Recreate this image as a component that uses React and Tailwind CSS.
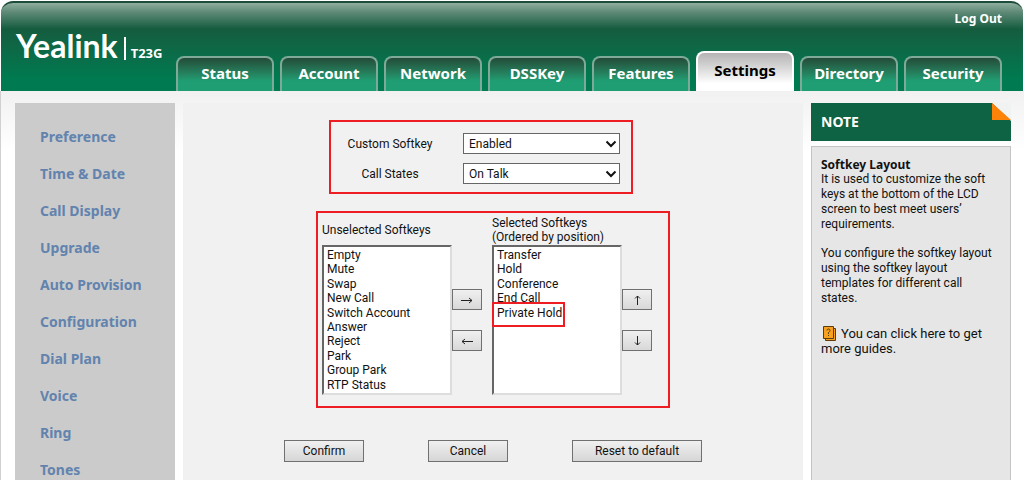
import React, { useState } from 'react';

const TABS = ['Status', 'Account', 'Network', 'DSSKey', 'Features', 'Settings', 'Directory', 'Security'];

const MENU = [
  'Preference',
  'Time & Date',
  'Call Display',
  'Upgrade',
  'Auto Provision',
  'Configuration',
  'Dial Plan',
  'Voice',
  'Ring',
  'Tones'
];

const UNSELECTED = [
  'Empty',
  'Mute',
  'Swap',
  'New Call',
  'Switch Account',
  'Answer',
  'Reject',
  'Park',
  'Group Park',
  'RTP Status'
];

const SELECTED = ['Transfer', 'Hold', 'Conference', 'End Call', 'Private Hold'];

const Header = () => (
  <header className="mx-px mt-px flex h-[90px] justify-between rounded-t-xl border-t-2 border-[#1d4d3a] bg-[linear-gradient(#8fae9f_0px,#5f8a77_9px,#155c3f_26px,#0f6645_42px,#007a50_75px)]">
    <div className="flex h-[57px] items-end pl-[15px] text-white">
      <span className="font-[Lato,sans-serif] text-[32px] leading-7 font-bold">Yealink</span>
      <span className="ml-[6px] h-[23px] border-l-2 border-white pl-[5px] text-[13px] leading-[33px] font-bold">T23G</span>
    </div>
    <div className="flex flex-col items-end justify-between pr-[21px]">
      <a href="#logout" className="pt-2 text-[12px] leading-4 font-bold text-white">Log Out</a>
      <nav className="flex items-end gap-[6px]">
        {TABS.map(tab => (
          <a
            key={tab}
            href={`#${tab.toLowerCase()}`}
            className={
              tab === 'Settings'
                ? 'h-10 w-[98px] rounded-t-lg border-2 border-b-0 border-white bg-linear-to-b from-[#b5b3b4] to-white to-80% text-center text-[15px] leading-[34px] font-bold text-black'
                : 'h-[35px] w-[98px] rounded-t-lg border-2 border-b-0 border-[#7fa998] bg-linear-to-b from-[#224c39] to-[#1f9e73] to-70% text-center text-[15px] leading-[30px] font-bold text-white'
            }
          >
            {tab}
          </a>
        ))}
      </nav>
    </div>
  </header>
);

const Sidebar = () => (
  <nav className="flex w-40 shrink-0 flex-col gap-[17px] bg-[#cbcbcb] pt-6 pl-[25px]">
    {MENU.map(item => (
      <a key={item} href="#menu" className="text-[14px] leading-5 font-bold text-[#6283ae]">
        {item}
      </a>
    ))}
  </nav>
);

const SelectRow = ({ id, label, value, options }) => (
  <div className="flex items-center">
    <label htmlFor={id} className="w-[118px] text-center">{label}</label>
    <div className="relative ml-[14px]">
      <select
        id={id}
        defaultValue={value}
        className="block h-[21px] w-[157px] appearance-none border border-[#666] bg-white pl-[5px] text-[12px] leading-4"
      >
        {options.map(option => (
          <option key={option}>{option}</option>
        ))}
      </select>
      <svg className="pointer-events-none absolute top-[7px] right-[3px] h-2 w-3" viewBox="0 0 12 8" fill="none" stroke="#111" strokeWidth="2">
        <path d="M1.500 1.500 6 6l4.500-4.500" />
      </svg>
    </div>
  </div>
);

const SoftkeyList = ({ id, items, className }) => (
  <select
    id={id}
    multiple
    size={10}
    className={`block h-[150px] overflow-hidden border-2 border-t-[#666] border-r-[#ddd] border-b-[#ddd] border-l-[#666] bg-white pt-px text-[12px] ${className}`}
  >
    {items.map(item => (
      <option key={item} className="px-[3px] py-0">{item}</option>
    ))}
  </select>
);

const ArrowButton = ({ label, children }) => (
  <button
    type="button"
    aria-label={label}
    className="flex h-[21px] w-[30px] items-center justify-center border border-[#707070] bg-linear-to-b from-[#f0f0f0] to-[#d8d8d8]"
  >
    <svg className="h-3 w-3" viewBox="0 0 12 12" fill="none" stroke="#222">
      {children}
    </svg>
  </button>
);

const FormButton = ({ children, className }) => (
  <button
    type="button"
    className={`h-[22px] border border-[#707070] bg-linear-to-b from-[#f0f0f0] to-[#d6d6d6] text-[12px] leading-5 ${className}`}
  >
    {children}
  </button>
);

const Note = () => (
  <aside className="flex w-[200px] shrink-0 flex-col">
    <div className="flex h-[38px] justify-between bg-[#0e6344]">
      <h2 className="pl-[10px] text-[14px] leading-[38px] font-bold text-white">NOTE</h2>
      <svg className="h-[18px] w-[19px]" viewBox="0 0 19 18">
        <path d="M0 0H19V18Z" fill="#f1f3f2" />
        <path d="M0 0 19 17H0Z" fill="#ff8308" />
      </svg>
    </div>
    <div className="mt-[5px] grow border border-b-0 border-[#c4c4c4] bg-[#e6e6e6] pt-[10px] pr-[14px] pl-[9px] font-[Roboto,sans-serif] text-[12px] leading-[15px]">
      <h3 className="font-['Noto_Sans',sans-serif] font-bold">Softkey Layout</h3>
      <p>It is used to customize the soft keys at the bottom of the LCD screen to best meet users’ requirements.</p>
      <p className="mt-[14px]">You configure the softkey layout using the softkey layout templates for different call states.</p>
      <a href="#guides" className="mt-5 block text-[13px]">
        <svg className="mr-1 ml-[2px] inline h-[15px] w-[14px] align-[-3px]" viewBox="0 0 14 15">
          <path d="M2.500 2.500H12.500V14.500H2.500Z" fill="#f7a11f" stroke="#5c3c0c" />
          <path d="M.5.5H10.500V12.500H.5Z" fill="#f7a11f" stroke="#5c3c0c" />
          <path d="M4 4.500Q4 3 5.500 3T7 4.500Q7 5.500 5.500 6.500V8M5.500 9V10" fill="none" stroke="#5c3c0c" />
        </svg>
        You can click here to get more guides.
      </a>
    </div>
  </aside>
);

const SoftkeyForm = () => {
  const [keys] = useState({ unselected: UNSELECTED, selected: SELECTED });

  return (
    <main className="flex grow flex-col items-center bg-[#f1f1f1] pt-[17px] font-[Roboto,sans-serif]">
      <div className="mr-6 flex flex-col gap-[9px] border-2 border-[#ee1c23] pt-[11px] pr-[11px] pb-2">
        <SelectRow id="custom-softkey" label="Custom Softkey" value="Enabled" options={['Enabled', 'Disabled']} />
        <SelectRow id="call-states" label="Call States" value="On Talk" options={['On Talk', 'Dialing', 'Ring Back']} />
      </div>

      <div className="mt-[17px] flex items-end border-2 border-[#ee1c23] pt-[3px] pr-4 pb-[11px] pl-1">
        <div>
          <label htmlFor="unselected" className="mb-2 block leading-[14px]">Unselected Softkeys</label>
          <SoftkeyList id="unselected" items={keys.unselected} className="w-[130px]" />
        </div>
        <div className="flex h-[150px] flex-col justify-center gap-5">
          <ArrowButton label="Add">
            <path d="M0 6.500H11M8 4 11 6.500 8 9" />
          </ArrowButton>
          <ArrowButton label="Remove">
            <path d="M12 6.500H1M4 4 1 6.500 4 9" />
          </ArrowButton>
        </div>
        <div className="ml-[10px]">
          <label htmlFor="selected" className="mb-px block leading-[14px]">
            Selected Softkeys<br />(Ordered by position)
          </label>
          <div className="relative">
            <SoftkeyList id="selected" items={keys.selected} className="w-[130px]" />
            <div className="pointer-events-none absolute top-[57px] left-0 h-[25px] w-[73px] border-2 border-[#ee1c23]" />
          </div>
        </div>
        <div className="flex h-[150px] flex-col justify-center gap-5">
          <ArrowButton label="Move up">
            <path d="M6.500 11V2M4 4.500 6.500 2 9 4.500" />
          </ArrowButton>
          <ArrowButton label="Move down">
            <path d="M6.500 1V10M4 7.500 6.500 10 9 7.500" />
          </ArrowButton>
        </div>
      </div>

      <div className="mt-8 flex gap-16">
        <FormButton className="w-20">Confirm</FormButton>
        <FormButton className="w-20">Cancel</FormButton>
        <FormButton className="w-[130px]">Reset to default</FormButton>
      </div>
    </main>
  );
};

const App = () => (
  <div className="flex min-h-screen flex-col bg-white font-['Noto_Sans',sans-serif] text-[12px] text-[#111]">
    <Header />
    <div className="flex grow gap-2 border-l border-[#d0d0d0] bg-[linear-gradient(#f1f1f1_0px,#ffffff_60px)] pt-3 pr-[13px] pl-[14px]">
      <Sidebar />
      <SoftkeyForm />
      <Note />
    </div>
  </div>
);

export default App;
